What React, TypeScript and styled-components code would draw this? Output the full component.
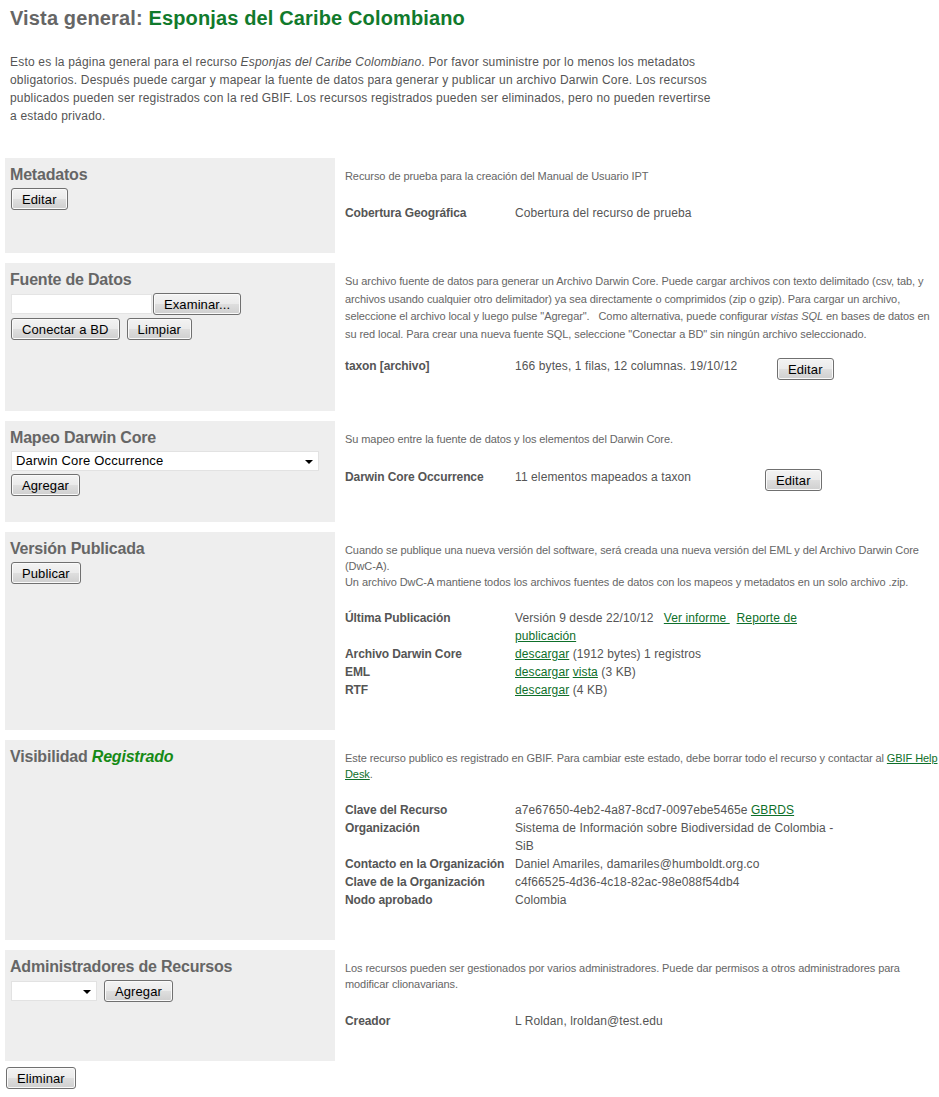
import styled, { createGlobalStyle } from "styled-components";

const GlobalStyle = createGlobalStyle`
  body {
    margin: 0;
    background: #fff;
    font-family: "Liberation Sans", Arial, sans-serif;
    color: #555;
  }
`;

function App() {
  return (
    <>
      <GlobalStyle />
      <Page>
        <Heading>
          Vista general: <Green>Esponjas del Caribe Colombiano</Green>
        </Heading>
        <Intro>
          Esto es la página general para el recurso <em>Esponjas del Caribe Colombiano</em>. Por favor
          suministre por lo menos los metadatos obligatorios. Después puede cargar y mapear la fuente de
          datos para generar y publicar un archivo Darwin Core. Los recursos publicados pueden ser
          registrados con la red GBIF. Los recursos registrados pueden ser eliminados, pero no pueden
          revertirse a estado privado.
        </Intro>

        <Sections>
          <Section>
            <Box>
              <BoxTitle>Metadatos</BoxTitle>
              <Button>Editar</Button>
            </Box>
            <Details>
              <Desc>Recurso de prueba para la creación del Manual de Usuario IPT</Desc>
              <Table $value="260px">
                <Label>Cobertura Geográfica</Label>
                <Value>Cobertura del recurso de prueba</Value>
              </Table>
            </Details>
          </Section>

          <Section>
            <Box>
              <BoxTitle>Fuente de Datos</BoxTitle>
              <Controls>
                <FileRow>
                  <FileInput />
                  <Button>Examinar...</Button>
                </FileRow>
                <ButtonRow>
                  <Button>Conectar a BD</Button>
                  <Button>Limpiar</Button>
                </ButtonRow>
              </Controls>
            </Box>
            <Details>
              <Desc $lh="17.5px" $gap="14px">
                Su archivo fuente de datos para generar un Archivo Darwin Core. Puede cargar archivos con
                texto delimitado (csv, tab, y archivos usando cualquier otro delimitador) ya sea
                directamente o comprimidos (zip o gzip). Para cargar un archivo, seleccione el archivo
                local y luego pulse "Agregar".&nbsp;&nbsp; Como alternativa, puede configurar{" "}
                <em>vistas SQL</em> en bases de datos en su red local. Para crear una nueva fuente SQL,
                seleccione "Conectar a BD" sin ningún archivo seleccionado.
              </Desc>
              <Table $value="262px">
                <Label>taxon [archivo]</Label>
                <Value>166 bytes, 1 filas, 12 columnas. 19/10/12</Value>
                <RowAction>
                  <Button>Editar</Button>
                </RowAction>
              </Table>
            </Details>
          </Section>

          <Section>
            <Box>
              <BoxTitle>Mapeo Darwin Core</BoxTitle>
              <Controls>
                <Select $width="308px">Darwin Core Occurrence</Select>
                <Button>Agregar</Button>
              </Controls>
            </Box>
            <Details>
              <Desc $gap="21px">Su mapeo entre la fuente de datos y los elementos del Darwin Core.</Desc>
              <Table $value="250px">
                <Label>Darwin Core Occurrence</Label>
                <Value>11 elementos mapeados a taxon</Value>
                <RowAction>
                  <Button>Editar</Button>
                </RowAction>
              </Table>
            </Details>
          </Section>

          <Section>
            <Box>
              <BoxTitle>Versión Publicada</BoxTitle>
              <Button>Publicar</Button>
            </Box>
            <Details>
              <Desc $gap="19px">
                Cuando se publique una nueva versión del software, será creada una nueva versión del EML
                y del Archivo Darwin Core (DwC-A).
                <br />
                Un archivo DwC-A mantiene todos los archivos fuentes de datos con los mapeos y metadatos
                en un solo archivo .zip.
              </Desc>
              <Table $value="330px">
                <Label>Última Publicación</Label>
                <Value>
                  Versión 9 desde 22/10/12&nbsp;&nbsp; <Link>Ver informe&nbsp;</Link>&nbsp;{" "}
                  <Link>Reporte de publicación</Link>
                </Value>
                <Label>Archivo Darwin Core</Label>
                <Value>
                  <Link>descargar</Link> (1912 bytes) 1 registros
                </Value>
                <Label>EML</Label>
                <Value>
                  <Link>descargar</Link> <Link>vista</Link> (3 KB)
                </Value>
                <Label>RTF</Label>
                <Value>
                  <Link>descargar</Link> (4 KB)
                </Value>
              </Table>
            </Details>
          </Section>

          <Section>
            <Box>
              <BoxTitle>
                Visibilidad <Status>Registrado</Status>
              </BoxTitle>
            </Box>
            <Details>
              <Desc $gap="19px">
                Este recurso publico es registrado en GBIF. Para cambiar este estado, debe borrar todo el
                recurso y contactar al <Link>GBIF Help Desk</Link>.
              </Desc>
              <Table $value="330px">
                <Label>Clave del Recurso</Label>
                <Value>
                  a7e67650-4eb2-4a87-8cd7-0097ebe5465e <Link>GBRDS</Link>
                </Value>
                <Label>Organización</Label>
                <Value>Sistema de Información sobre Biodiversidad de Colombia - SiB</Value>
                <Label>Contacto en la Organización</Label>
                <Value>Daniel Amariles, damariles@humboldt.org.co</Value>
                <Label>Clave de la Organización</Label>
                <Value>c4f66525-4d36-4c18-82ac-98e088f54db4</Value>
                <Label>Nodo aprobado</Label>
                <Value>Colombia</Value>
              </Table>
            </Details>
          </Section>

          <Section>
            <Box>
              <BoxTitle>Administradores de Recursos</BoxTitle>
              <ButtonRow>
                <Select $width="86px" />
                <Button>Agregar</Button>
              </ButtonRow>
            </Box>
            <Details>
              <Desc>
                Los recursos pueden ser gestionados por varios administradores. Puede dar permisos a otros
                administradores para modificar clionavarians.
              </Desc>
              <Table $value="330px">
                <Label>Creador</Label>
                <Value>L Roldan, lroldan@test.edu</Value>
              </Table>
            </Details>
          </Section>
        </Sections>

        <Footer>
          <Button>Eliminar</Button>
        </Footer>
      </Page>
    </>
  );
}

export default App;

const Page = styled.div`
  padding: 0 0 6px 5px;
`;

const Heading = styled.h1`
  margin: 0;
  padding: 6px 0 0 5px;
  font-size: 20px;
  line-height: 24px;
  font-weight: bold;
  letter-spacing: 0.14px;
  color: #666;
`;

const Green = styled.span`
  color: #117a2c;
`;

const Intro = styled.p`
  margin: 23px 0 0 5px;
  width: 706px;
  font-size: 12px;
  line-height: 18px;
  letter-spacing: 0.2px;
  color: #555;

  em {
    font-style: italic;
  }
`;

const Sections = styled.div`
  margin-top: 33px;
  display: flex;
  flex-direction: column;
  gap: 10px;
`;

const Section = styled.div`
  display: grid;
  grid-template-columns: 330px 1fr;
  column-gap: 10px;
`;

const Box = styled.div`
  background: #eeeeee;
  padding: 8px 5px 7px;
`;

const BoxTitle = styled.h2`
  margin: 0 0 4px;
  font-size: 16px;
  line-height: 18px;
  font-weight: bold;
  letter-spacing: -0.2px;
  color: #666;
`;

const Status = styled.em`
  color: #168a16;
`;

const Controls = styled.div`
  display: flex;
  flex-direction: column;
  align-items: flex-start;
  gap: 3px;
`;

const FileRow = styled.div`
  display: flex;
  align-items: center;
  margin-left: 1px;

  button {
    margin-left: 1px;
  }
`;

const FileInput = styled.div`
  width: 141px;
  height: 20px;
  background: #fff;
  border: 1px solid #e4e4e4;
  box-sizing: border-box;
`;

const ButtonRow = styled.div`
  display: flex;
  align-items: center;
  gap: 6px;
`;

const Button = styled.button`
  margin: 0 0 0 1px;
  height: 22px;
  padding: 0 10px;
  font-family: "Liberation Sans", Arial, sans-serif;
  font-size: 13px;
  letter-spacing: 0.1px;
  color: #000;
  border: 1px solid #707070;
  border-radius: 3px;
  background: linear-gradient(#f3f3f3 0%, #ebebeb 48%, #dedede 52%, #cfcfcf 100%);
  box-shadow: inset 0 0 0 1px #fafafa;
  cursor: pointer;
`;

const Select = styled.div<{ $width: string }>`
  position: relative;
  width: ${(p) => p.$width};
  height: 20px;
  margin-left: 1px;
  box-sizing: border-box;
  padding: 0 20px 0 4px;
  background: #fff;
  border: 1px solid #e2e2e2;
  font-size: 13px;
  line-height: 18px;
  letter-spacing: 0.2px;
  color: #000;

  &::after {
    content: "";
    position: absolute;
    right: 5px;
    top: 8px;
    border-left: 4px solid transparent;
    border-right: 4px solid transparent;
    border-top: 4px solid #000;
  }
`;

const Details = styled.div`
  padding: 10px 0 31px;
`;

const Desc = styled.p<{ $lh?: string; $gap?: string }>`
  margin: 0 0 ${(p) => p.$gap || "20px"};
  font-size: 11px;
  line-height: ${(p) => p.$lh || "16px"};
  letter-spacing: -0.08px;
  color: #666;

  em {
    font-style: italic;
  }
`;

const Table = styled.div<{ $value: string }>`
  display: grid;
  grid-template-columns: 170px ${(p) => p.$value} auto;
  justify-content: start;
  align-items: start;
  font-size: 12px;
  line-height: 18px;
`;

const Label = styled.div`
  grid-column: 1;
  font-weight: bold;
  letter-spacing: -0.1px;
  color: #555;
`;

const Value = styled.div`
  grid-column: 2;
  letter-spacing: 0.1px;
  color: #555;
`;

const RowAction = styled.div`
  grid-column: 3;
  padding-top: 1px;

  button {
    margin: 0;
  }
`;

const Link = styled.a`
  color: #0e6f2a;
  text-decoration: underline;
  cursor: pointer;
`;

const Footer = styled.div`
  margin-top: 6px;
`;
